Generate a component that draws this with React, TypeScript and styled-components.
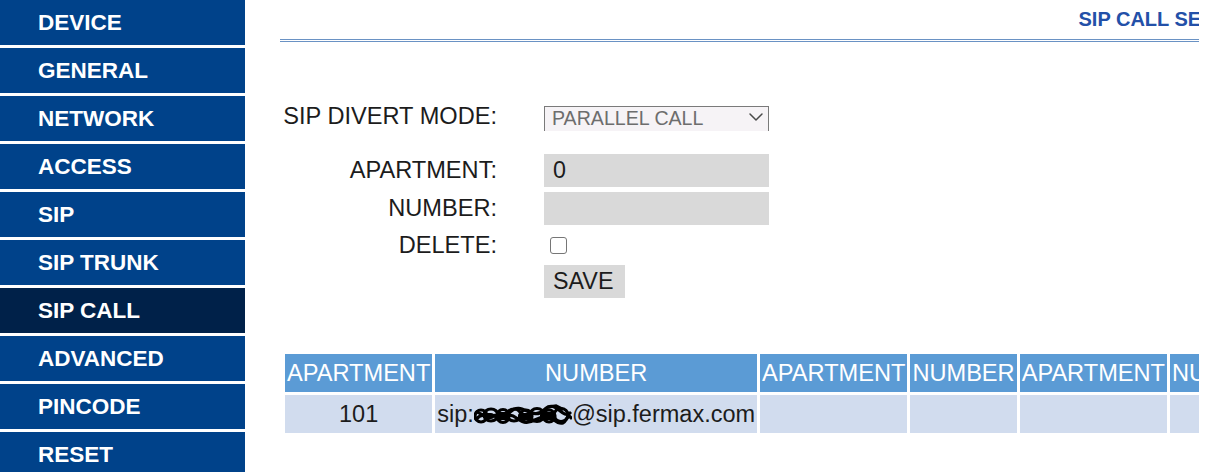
import { FC } from "react";
import styled, { createGlobalStyle } from "styled-components";
import { ChevronDown } from "lucide-react";

const GlobalStyle = createGlobalStyle`
  html, body {
    margin: 0;
    padding: 0;
    overflow: hidden;
    background: #fff;
    font-family: "Liberation Sans", Arial, sans-serif;
  }
`;

const menu = [
  "DEVICE",
  "GENERAL",
  "NETWORK",
  "ACCESS",
  "SIP",
  "SIP TRUNK",
  "SIP CALL",
  "ADVANCED",
  "PINCODE",
  "RESET",
];

const headers = [
  "APARTMENT",
  "NUMBER",
  "APARTMENT",
  "NUMBER",
  "APARTMENT",
  "NUMBER",
  "APARTMENT",
  "NUMBER",
];

// scribble drawn over the redacted phone number
const Scribble: FC = () => (
  <ScribbleSvg width="98" height="22" viewBox="0 0 98 22">
    <g fill="none" stroke="#000" strokeWidth="3.2" strokeLinecap="round">
      <ellipse cx="7" cy="12" rx="6" ry="6" />
      <ellipse cx="17" cy="11" rx="7" ry="6" />
      <ellipse cx="29" cy="12" rx="6" ry="6.5" />
      <ellipse cx="40" cy="11" rx="7" ry="6" />
      <ellipse cx="52" cy="12" rx="6" ry="6" />
      <ellipse cx="63" cy="11" rx="7" ry="6.5" />
      <ellipse cx="75" cy="12" rx="6" ry="6" />
      <ellipse cx="87" cy="11" rx="7" ry="6.5" />
      <path d="M2 15 C 14 4, 24 20, 36 8 S 58 18, 70 6 S 88 16, 96 9" />
      <path d="M3 8 C 18 18, 30 4, 44 15 S 66 5, 80 16 S 92 6, 97 14" />
      <path d="M74 3 L 82 2 L 88 5" />
    </g>
    <g fill="#000">
      <rect x="10" y="9" width="10" height="6" rx="3" />
      <rect x="22" y="8" width="14" height="8" rx="3" />
      <rect x="44" y="9" width="14" height="7" rx="3" />
      <rect x="66" y="8" width="16" height="8" rx="3" />
    </g>
  </ScribbleSvg>
);

const App: FC = () => {
  return (
    <>
      <GlobalStyle />
      <Layout>
        <Sidebar>
          {menu.map((item) => (
            <MenuItem key={item} $active={item === "SIP CALL"}>
              {item}
            </MenuItem>
          ))}
        </Sidebar>
        <Main>
          <Page>
            <Title>SIP CALL SETTINGS</Title>
            <Rule />

            <FormBlock>
              <Row $h={25} $gap={0}>
                <Label>SIP DIVERT MODE:</Label>
                <SelectWrap>
                  <Select defaultValue="parallel">
                    <option value="parallel">PARALLEL CALL</option>
                    <option value="sequential">SEQUENTIAL CALL</option>
                  </Select>
                  <Chevron size={24} strokeWidth={1.5} />
                </SelectWrap>
              </Row>
              <Row $h={33} $gap={25}>
                <Label>APARTMENT:</Label>
                <Input type="text" defaultValue="0" />
              </Row>
              <Row $h={33} $gap={5}>
                <Label>NUMBER:</Label>
                <Input type="text" defaultValue="" />
              </Row>
              <Row $h={30} $gap={5}>
                <Label>DELETE:</Label>
                <Checkbox type="checkbox" />
              </Row>
              <Row $h={33} $gap={5}>
                <span />
                <SaveButton type="button">SAVE</SaveButton>
              </Row>
            </FormBlock>

            <Table>
              <thead>
                <tr>
                  {headers.map((h, i) => (
                    <Th key={i}>{h}</Th>
                  ))}
                </tr>
              </thead>
              <tbody>
                <tr>
                  <Td>101</Td>
                  <Td>
                    sip:
                    <Scribble />
                    @sip.fermax.com
                  </Td>
                  <Td />
                  <Td />
                  <Td />
                  <Td />
                  <Td />
                  <Td />
                </tr>
              </tbody>
            </Table>
          </Page>
        </Main>
      </Layout>
    </>
  );
};

export default App;

const Layout = styled.div`
  display: flex;
  align-items: flex-start;
  height: 472px;
  overflow: hidden;
`;

const Sidebar = styled.nav`
  width: 245px;
  flex-shrink: 0;
  display: flex;
  flex-direction: column;
  gap: 3px;
`;

const MenuItem = styled.div<{ $active?: boolean }>`
  height: 45px;
  line-height: 45px;
  padding-left: 38px;
  background: ${({ $active }) => ($active ? "#002149" : "#00428a")};
  color: #fff;
  font-size: 22.5px;
  font-weight: bold;
  white-space: nowrap;
  flex-shrink: 0;
`;

const Main = styled.main`
  margin-left: 35px;
  width: 919px;
  flex-shrink: 0;
  overflow: hidden;
`;

const Page = styled.div`
  width: 1793px;
  color: #1c1c1c;
  font-size: 23.6px;
`;

const Title = styled.h1`
  margin: 0;
  padding-top: 8px;
  font-size: 20px;
  line-height: 22px;
  font-weight: bold;
  text-align: center;
  color: #2350a8;
`;

const Rule = styled.div`
  margin-top: 9px;
  height: 0;
  border-top: 3px double #6a92c4;
`;

const FormBlock = styled.div`
  margin-top: 62px;
`;

const Row = styled.div<{ $h: number; $gap: number }>`
  display: grid;
  grid-template-columns: 220px 225px;
  column-gap: 44px;
  align-items: center;
  height: ${({ $h }) => $h}px;
  margin-top: ${({ $gap }) => $gap}px;
`;

const Label = styled.span`
  text-align: right;
  padding-right: 3px;
  line-height: 25px;
  white-space: nowrap;
`;

const SelectWrap = styled.div`
  position: relative;
  height: 25px;
`;

const Select = styled.select`
  appearance: none;
  width: 225px;
  height: 25px;
  margin: 0;
  padding: 0 0 0 7px;
  border: 1px solid #7a7a7a;
  border-bottom: none;
  border-radius: 0;
  background: #f6f3f6;
  color: #6d6d6d;
  font-family: "Liberation Sans", Arial, sans-serif;
  font-size: 19.6px;
  line-height: 23px;
  outline: none;
`;

const Chevron = styled(ChevronDown)`
  position: absolute;
  top: 1px;
  right: 1px;
  color: #4a4a4a;
  pointer-events: none;
`;

const Input = styled.input`
  box-sizing: border-box;
  width: 225px;
  height: 33px;
  margin: 0;
  padding: 0 9px;
  border: none;
  background: #d9d9d9;
  color: #1c1c1c;
  font-family: "Liberation Sans", Arial, sans-serif;
  font-size: 23.3px;
  outline: none;
`;

const Checkbox = styled.input`
  appearance: none;
  box-sizing: border-box;
  width: 17px;
  height: 17px;
  margin: 0 0 0 6px;
  border: 1px solid #767676;
  border-radius: 3px;
  background: #fff;
`;

const SaveButton = styled.button`
  box-sizing: border-box;
  width: 81px;
  height: 33px;
  margin: 0;
  padding: 0 0 0 9px;
  border: none;
  background: #d9d9d9;
  color: #1c1c1c;
  text-align: left;
  font-family: "Liberation Sans", Arial, sans-serif;
  font-size: 23.3px;
`;

const Table = styled.table`
  margin: 53px 0 0 2px;
  border-spacing: 3px;
  border-collapse: separate;
`;

const Th = styled.th`
  height: 38px;
  padding: 0 2px;
  background: #5b9bd5;
  color: #fff;
  font-weight: normal;
  font-size: 23.6px;
  white-space: nowrap;
  text-align: center;
`;

const Td = styled.td`
  height: 38px;
  padding: 0 2px;
  background: #d1dcee;
  color: #1c1c1c;
  font-size: 23.5px;
  white-space: nowrap;
  text-align: center;
`;

const ScribbleSvg = styled.svg`
  display: inline-block;
  vertical-align: -4px;
`;
